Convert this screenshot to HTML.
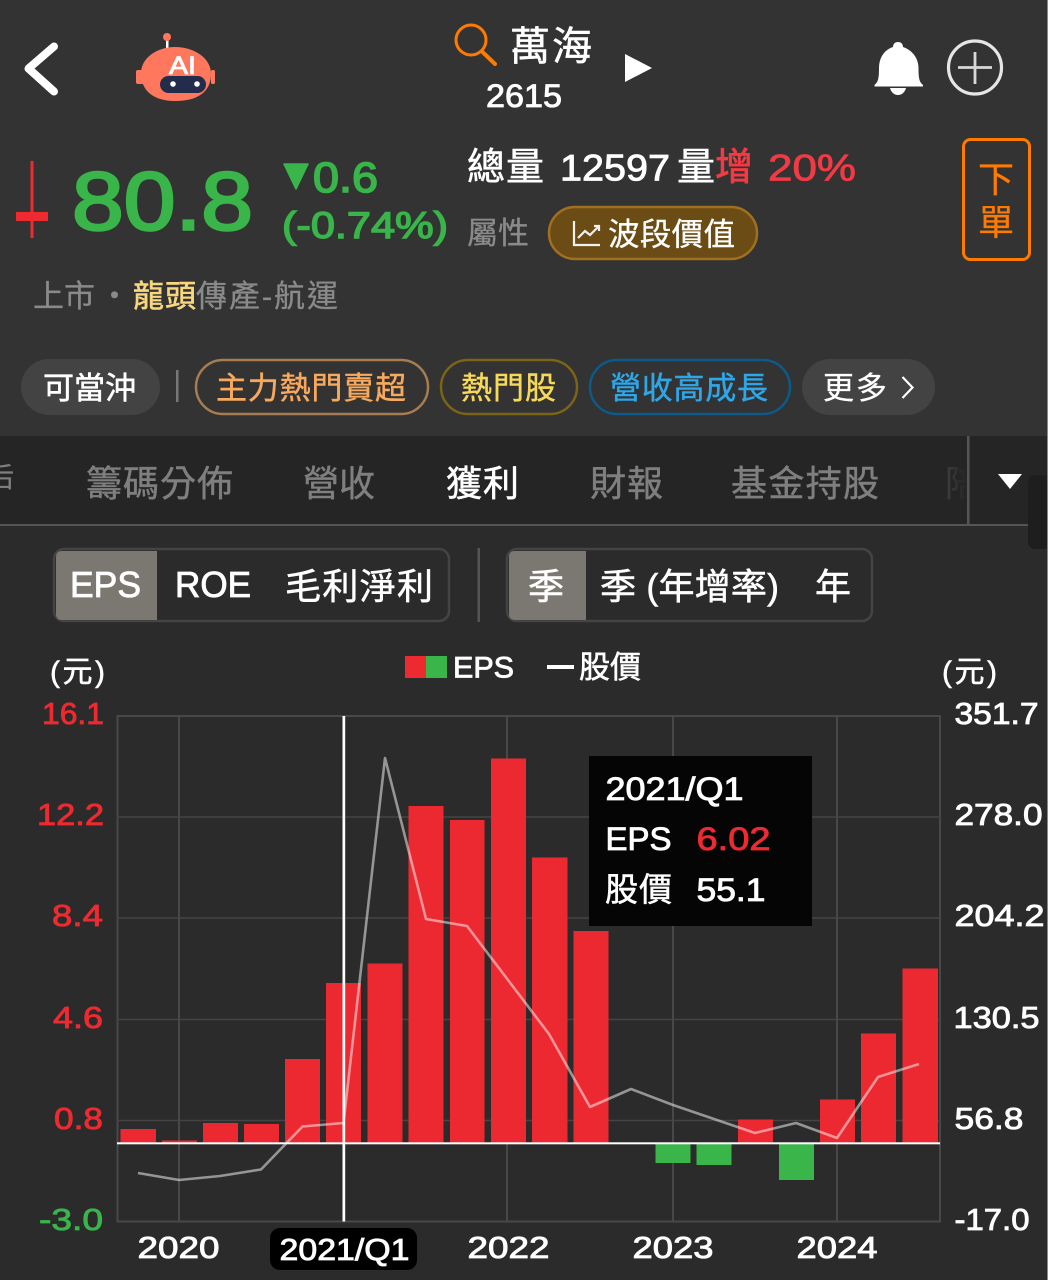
<!DOCTYPE html>
<html lang="zh-Hant">
<head>
<meta charset="utf-8">
<title>萬海 2615</title>
<style>
html,body{margin:0;padding:0;background:#333;width:1048px;height:1280px;overflow:hidden}
svg{display:block;position:absolute;left:0;top:0}
text{font-family:"Liberation Sans","Noto Sans CJK TC",sans-serif;fill:#fff;stroke:#fff;stroke-width:.55px}
text.g{fill:#8a8a8a;stroke:#8a8a8a;stroke-width:.3px}
text.tab{fill:#7f7f7f;stroke:#7f7f7f;font-size:36px;stroke-width:.45px}
text.r{fill:#ee2a31;stroke:#ee2a31}
text.gn{fill:#39b54a;stroke:#39b54a}
text.rr{fill:#f23a45;stroke:#f23a45;stroke-width:.8px}
text.y{fill:#f9d77e;stroke:#f9d77e;stroke-width:.6px}
text.o{fill:#ff7a00;stroke:#ff7a00;stroke-width:.3px}
text.or{fill:#f7a95e;stroke:#f7a95e;stroke-width:.45px}
text.ye{fill:#f7d95a;stroke:#f7d95a;stroke-width:.45px}
text.bl{fill:#2ea6e8;stroke:#2ea6e8;stroke-width:.45px}
text.d{fill:#555;stroke:#555;stroke-width:.3px}
text.b{stroke-width:.85px}
text.n{stroke-width:.3px}
</style>
</head>
<body>
<svg width="1048" height="1280" viewBox="0 0 1048 1280" xmlns="http://www.w3.org/2000/svg">
<defs>
<linearGradient id="fade" x1="0" x2="1" y1="0" y2="0"><stop offset="0" stop-color="#252525" stop-opacity="0"/><stop offset="1" stop-color="#252525"/></linearGradient>
</defs>
<!-- backgrounds -->
<rect width="1048" height="1280" fill="#2b2b2b"/>
<rect width="1048" height="436" fill="#333"/>
<rect y="436" width="1048" height="88" fill="#252525"/>
<rect y="524" width="1048" height="2" fill="#555"/>

<!-- back -->
<path d="M54 46.500 L28.500 68.500 L54 91.500" fill="none" stroke="#fff" stroke-width="8" stroke-linecap="round" stroke-linejoin="round"/>

<!-- robot -->
<rect x="136" y="70" width="8" height="14" rx="2" fill="#ff775c"/>
<rect x="211" y="70" width="4" height="14" rx="1.500" fill="#ff775c"/>
<rect x="166" y="40" width="2.500" height="9" fill="#fff"/>
<circle cx="167" cy="37" r="4" fill="#ff775c"/>
<path d="M141 73 C141 58 157 47 175 47 C194 47 211 58 211 74 C211 93 196 101 175 101 C155 101 141 92 141 73Z" fill="#ff775c"/>
<text x="169" y="74" font-size="25" textLength="27" lengthAdjust="spacingAndGlyphs" class="b">AI</text>
<rect x="160" y="76" width="46" height="17" rx="8.500" fill="#232c4a"/>
<circle cx="173" cy="84" r="2.800" fill="#fff"/>
<circle cx="197" cy="84" r="2.800" fill="#fff"/>

<!-- search + title -->
<circle cx="471" cy="40" r="15" fill="none" stroke="#ff7a00" stroke-width="3"/>
<path d="M482 51.500 L495 64" stroke="#ff7a00" stroke-width="4" stroke-linecap="round"/>
<text x="510" y="60" font-size="40" textLength="82">萬海</text>
<text x="486" y="107" font-size="32" textLength="76" lengthAdjust="spacingAndGlyphs" class="b">2615</text>
<path d="M625 54 L652 68 L625 82Z" fill="#fff"/>

<!-- bell -->
<path d="M898 42 C895 42 893 44 893 47 C884 50 879 58 879 68 C879 79 878 82 874.500 85 L874.500 86.500 L923 86.500 L923 85 C919.500 82 918.500 79 918.500 68 C918.500 58 912 50 903 47 C903 44 901 42 898 42Z" fill="#fff"/>
<path d="M890 88 L906 88 C905 92 902 95 898 95 C894 95 891 92 890 88Z" fill="#fff"/>
<!-- plus -->
<circle cx="975" cy="67.500" r="26.500" fill="none" stroke="#e6e6e6" stroke-width="3.200"/>
<path d="M958 67.500 H992 M975 52 V84" stroke="#d8d8d8" stroke-width="2.800"/>

<!-- k line -->
<rect x="30.500" y="161" width="3" height="77" fill="#ee2a31"/>
<rect x="16" y="212" width="32" height="9" fill="#ee2a31"/>

<!-- price -->
<text x="72" y="229.500" font-size="83" textLength="181" lengthAdjust="spacingAndGlyphs" class="gn" style="stroke-width:2.600px">80.8</text>
<path d="M284 164 H308 L296 189Z" fill="#39b54a" stroke="#39b54a" stroke-width="1.500" stroke-linejoin="round"/>
<text x="313" y="192" font-size="43" textLength="65" lengthAdjust="spacingAndGlyphs" class="gn" style="stroke-width:1.600px">0.6</text>
<text x="282" y="238" font-size="37" textLength="166" lengthAdjust="spacingAndGlyphs" class="gn" style="stroke-width:1.400px">(-0.74%)</text>

<!-- volume -->
<text x="467" y="180" font-size="38" textLength="77">總量</text>
<text x="560" y="180.500" font-size="37" textLength="110" lengthAdjust="spacingAndGlyphs" class="b">12597</text>
<text x="677" y="180" font-size="38">量</text>
<text x="715" y="180" font-size="38" class="rr">增</text>
<text x="768" y="180.500" font-size="37" textLength="88" lengthAdjust="spacingAndGlyphs" class="rr">20%</text>
<text x="467" y="244" font-size="31" textLength="62" class="g">屬性</text>

<!-- pill -->
<rect x="549" y="207" width="208" height="52" rx="26" fill="#6b4c14" stroke="#a1701f" stroke-width="2.500"/>
<path d="M574 221 V245 H600 M578 238 L585 231 L590 235 L599 226 M594 226 H599 V231" fill="none" stroke="#f0f0f0" stroke-width="2.200"/>
<text x="608" y="245" font-size="31.500" textLength="127" class="n">波段價值</text>

<!-- order -->
<rect x="963.500" y="139.500" width="66" height="120" rx="7" fill="none" stroke="#ff7a00" stroke-width="3"/>
<text x="978" y="192" font-size="36" class="o">下</text>
<text x="978" y="235" font-size="36" class="o">單</text>

<!-- info -->
<text x="33" y="307" font-size="31" textLength="62" class="g">上市</text>
<text x="99" y="307" font-size="31" class="g">・</text>
<text x="133" y="307" font-size="31" textLength="63" class="y">龍頭</text>
<text x="196" y="307" font-size="31" textLength="142" class="g">傳產-航運</text>

<!-- tags -->
<rect x="21" y="359" width="139" height="56" rx="28" fill="#434343"/>
<text x="43" y="399" font-size="31" textLength="93">可當沖</text>
<rect x="176" y="370" width="2.500" height="32" fill="#777"/>
<rect x="196" y="360" width="232" height="54" rx="27" fill="none" stroke="#a67c52" stroke-width="2.500"/>
<text x="216" y="399" font-size="31" textLength="190" class="or">主力熱門賣超</text>
<rect x="441" y="360" width="136" height="54" rx="27" fill="none" stroke="#7a6416" stroke-width="2.500"/>
<text x="461" y="399" font-size="31" textLength="95" class="ye">熱門股</text>
<rect x="590" y="360" width="200" height="54" rx="27" fill="none" stroke="#0b5a8a" stroke-width="2.500"/>
<text x="610" y="399" font-size="31" textLength="158" class="bl">營收高成長</text>
<rect x="802" y="359" width="133" height="56" rx="28" fill="#434343"/>
<text x="823" y="399" font-size="31" textLength="64" class="n">更多</text>
<path d="M902.500 377 L912.500 387.500 L902.500 398" fill="none" stroke="#fff" stroke-width="2.200"/>

<!-- tabs -->
<svg x="0" y="440" width="16" height="60"><text x="-13" y="47" font-size="27" class="g" style="fill:#7f7f7f;stroke:#7f7f7f">后</text></svg>
<text x="86" y="496" class="tab" textLength="147">籌碼分佈</text>
<text x="303" y="496" class="tab" textLength="72">營收</text>
<text x="446" y="496" font-size="36" textLength="73">獲利</text>
<text x="590" y="496" class="tab" textLength="73">財報</text>
<text x="731" y="496" class="tab" textLength="148">基金持股</text>
<svg x="945" y="440" width="22" height="80"><text x="0" y="56" font-size="36" class="d">陪</text></svg>
<rect x="925" y="440" width="42" height="80" fill="url(#fade)"/>
<rect x="967" y="436" width="2.500" height="88" fill="#555"/>
<path d="M998 474 H1022 L1010 489Z" fill="#fff"/>
<path d="M1048 475 H1036 Q1028 475 1028 483 V541 Q1028 549 1036 549 H1048Z" fill="#1e1e1e"/>
<rect x="1047" y="0" width="1" height="1280" fill="#8a8a8a"/>

<!-- segmented 1 -->
<rect x="54" y="549" width="395" height="72" rx="10" fill="none" stroke="#444" stroke-width="2.500"/>
<path d="M62 551 H157 V620 H62 Q56 620 56 614 V557 Q56 551 62 551Z" fill="#7b7771"/>
<text x="70" y="597" font-size="36" textLength="71" lengthAdjust="spacingAndGlyphs" class="b">EPS</text>
<text x="175" y="597" font-size="36" textLength="76" lengthAdjust="spacingAndGlyphs" class="b">ROE</text>
<text x="285" y="599" font-size="36" textLength="148">毛利淨利</text>
<rect x="477.500" y="548" width="2.500" height="74" fill="#555"/>
<!-- segmented 2 -->
<rect x="507" y="549" width="365" height="72" rx="10" fill="none" stroke="#444" stroke-width="2.500"/>
<path d="M515 551 H586 V620 H515 Q509 620 509 614 V557 Q509 551 515 551Z" fill="#7b7771"/>
<text x="528" y="599" font-size="36">季</text>
<text x="600" y="599" font-size="36" textLength="179">季 (年增率)</text>
<text x="815" y="599" font-size="36">年</text>

<!-- legend -->
<rect x="405" y="656" width="21" height="22" fill="#ee2a31"/>
<rect x="426" y="656" width="21" height="22" fill="#39b54a"/>
<text x="453" y="677.500" font-size="30" textLength="61" lengthAdjust="spacingAndGlyphs" class="b">EPS</text>
<rect x="547" y="665" width="27" height="4" fill="#fff"/>
<text x="579" y="678" font-size="31" textLength="62">股價</text>
<text x="50" y="682" font-size="30" textLength="55">(元)</text>
<text x="942" y="682" font-size="30" textLength="55">(元)</text>

<!-- grid -->
<g stroke="#484848" stroke-width="2" fill="none">
<rect x="117.500" y="716" width="822.500" height="505.500"/>
<path d="M117 817 H940 M117 918 H940 M117 1019.500 H940 M117 1120.500 H940" stroke-width="1.500" stroke="#444"/>
<path d="M179 716 V1221 M507 716 V1221 M673 716 V1221 M837 716 V1221"/>
</g>

<!-- bars -->
<g fill="#ec2830">
<rect x="120.500" y="1129" width="35.500" height="14"/>
<rect x="162" y="1140.500" width="35" height="2"/>
<rect x="203" y="1123" width="35" height="20"/>
<rect x="244" y="1124" width="35" height="19"/>
<rect x="285" y="1059" width="35" height="84"/>
<rect x="326" y="983" width="35" height="160"/>
<rect x="367.500" y="963.500" width="35" height="179.500"/>
<rect x="408.500" y="806" width="35" height="337"/>
<rect x="450" y="820" width="34.500" height="323"/>
<rect x="491" y="758.500" width="35" height="384.500"/>
<rect x="532" y="857.500" width="35.500" height="285.500"/>
<rect x="573.500" y="931" width="35" height="212"/>
<rect x="738" y="1119.500" width="35" height="23.500"/>
<rect x="820" y="1099.500" width="35" height="43.500"/>
<rect x="861" y="1033.500" width="35" height="109.500"/>
<rect x="902.500" y="968.500" width="35.500" height="174.500"/>
</g>
<g fill="#39b54a">
<rect x="655.500" y="1143" width="35" height="20"/>
<rect x="696.500" y="1143" width="35" height="22"/>
<rect x="779" y="1143" width="35" height="37"/>
</g>
<rect x="117" y="1142.300" width="823" height="2" fill="#fff"/>
<rect x="342.500" y="716" width="2.700" height="505.500" fill="#fff"/>
<polyline points="138,1173 179,1180 220,1176 261,1169.500 302.500,1126.500 343.500,1123 385,758 426,919 467,926 508,980 549,1034 590,1107 631,1089 673,1105 714,1119 755,1133 796,1123 837,1138 878,1077 919,1064" fill="none" stroke="#fff" stroke-opacity=".5" stroke-width="2.600" stroke-linejoin="round"/>

<!-- left axis -->
<g>
<text x="42" y="724" font-size="31" textLength="62" lengthAdjust="spacingAndGlyphs" class="r b">16.1</text>
<text x="37" y="825" font-size="31" textLength="67" lengthAdjust="spacingAndGlyphs" class="r b">12.2</text>
<text x="52" y="926" font-size="31" textLength="51" lengthAdjust="spacingAndGlyphs" class="r b">8.4</text>
<text x="53" y="1028" font-size="31" textLength="50" lengthAdjust="spacingAndGlyphs" class="r b">4.6</text>
<text x="54" y="1129" font-size="31" textLength="49" lengthAdjust="spacingAndGlyphs" class="r b">0.8</text>
<text x="39" y="1230" font-size="31" textLength="64" lengthAdjust="spacingAndGlyphs" class="gn b">-3.0</text>
</g>
<!-- right axis -->
<g>
<text x="954.500" y="724" font-size="31" textLength="84" lengthAdjust="spacingAndGlyphs" class="b">351.7</text>
<text x="954.500" y="825" font-size="31" textLength="88" lengthAdjust="spacingAndGlyphs" class="b">278.0</text>
<text x="954.500" y="926" font-size="31" textLength="90" lengthAdjust="spacingAndGlyphs" class="b">204.2</text>
<text x="953.500" y="1028" font-size="31" textLength="86" lengthAdjust="spacingAndGlyphs" class="b">130.5</text>
<text x="954.500" y="1129" font-size="31" textLength="69" lengthAdjust="spacingAndGlyphs" class="b">56.8</text>
<text x="954.500" y="1230" font-size="31" textLength="75" lengthAdjust="spacingAndGlyphs" class="b">-17.0</text>
</g>
<!-- x axis -->
<text x="137.500" y="1258" font-size="31" textLength="82" lengthAdjust="spacingAndGlyphs" class="b">2020</text>
<rect x="270" y="1228" width="147" height="42" rx="10" fill="#000"/>
<text x="279.500" y="1260" font-size="31" textLength="130" lengthAdjust="spacingAndGlyphs" class="b">2021/Q1</text>
<text x="467.500" y="1258" font-size="31" textLength="82" lengthAdjust="spacingAndGlyphs" class="b">2022</text>
<text x="632.500" y="1258" font-size="31" textLength="81" lengthAdjust="spacingAndGlyphs" class="b">2023</text>
<text x="796.500" y="1258" font-size="31" textLength="81" lengthAdjust="spacingAndGlyphs" class="b">2024</text>

<!-- tooltip -->
<rect x="589" y="756" width="223" height="170" fill="#050505"/>
<text x="605.500" y="800" font-size="32" textLength="138" lengthAdjust="spacingAndGlyphs" class="b">2021/Q1</text>
<text x="605.500" y="850" font-size="32" textLength="66" lengthAdjust="spacingAndGlyphs" class="b">EPS</text>
<text x="696.500" y="850" font-size="32" textLength="74" lengthAdjust="spacingAndGlyphs" class="r b">6.02</text>
<text x="605" y="901" font-size="33" textLength="67">股價</text>
<text x="696.500" y="901" font-size="32" textLength="69" lengthAdjust="spacingAndGlyphs" class="b">55.1</text>
</svg>
</body>
</html>
